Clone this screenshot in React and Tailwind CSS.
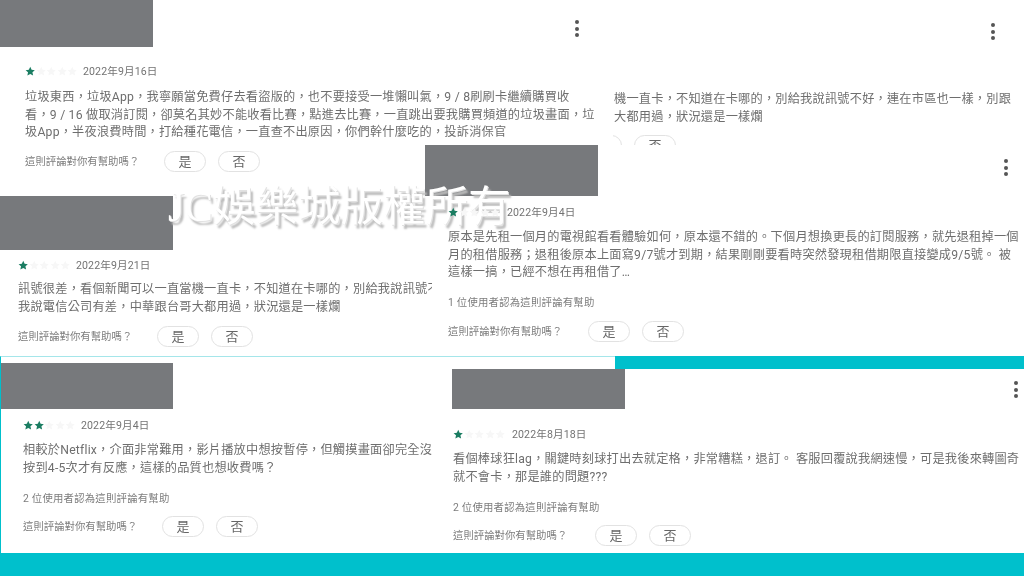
const sans = { fontFamily: '"Roboto","Noto Sans CJK TC","Noto Sans CJK SC",sans-serif' };

function Star({ on }) {
  return (
    <svg viewBox="0 0 24 24" className="w-[10.5px] h-[10.5px] shrink-0" aria-hidden="true">
      <path d="M12 1.8l3.1 6.9 7.4.8-5.5 5 1.5 7.4L12 18.2l-6.6 3.7 1.5-7.4-5.5-5 7.4-.8z" fill={on ? "#1b7d62" : "#f7f7f7"} />
    </svg>
  );
}

function Rating({ n, date, gap }) {
  return (
    <div className={`flex items-center ${gap}`}>
      <div className="relative z-10 flex w-[50px]">
        {[1, 2, 3, 4, 5].map((i) => (
          <Star key={i} on={i <= n} />
        ))}
      </div>
      <span className="text-[10.6px] leading-[16px] tracking-[0.1px] text-[#737373] translate-y-[1px]">{date}</span>
    </div>
  );
}

function Dots() {
  return (
    <div className="flex flex-col gap-[2.5px]">
      <span className="w-1 h-1 rounded-full bg-[#555]" />
      <span className="w-1 h-1 rounded-full bg-[#555]" />
      <span className="w-1 h-1 rounded-full bg-[#555]" />
    </div>
  );
}

function Btn({ children }) {
  return (
    <span className="w-[42px] h-[21px] rounded-full border border-[#e2e2e2] bg-white flex items-center justify-center text-[13px] text-[#666]">
      {children}
    </span>
  );
}

function Help({ w = "w-[139px]" }) {
  return (
    <div className="flex items-center">
      <span className={`${w} text-[10.4px] leading-[14px] text-[#7d7d7d] whitespace-nowrap`}>這則評論對你有幫助嗎？</span>
      <div className="flex gap-3">
        <Btn>是</Btn>
        <Btn>否</Btn>
      </div>
    </div>
  );
}

function Body({ lines }) {
  return (
    <div className="text-[12.2px] leading-[17.7px] text-[#6e6e6e] whitespace-nowrap tracking-[0.22px]">
      {lines.map((l) => (
        <div key={l}>{l}</div>
      ))}
    </div>
  );
}

function Voted({ children }) {
  return <div className="text-[10.4px] leading-[14px] tracking-[0.2px] text-[#7d7d7d] whitespace-nowrap">{children}</div>;
}

function Grey({ className }) {
  return <div className={`bg-[#77797c] shrink-0 ${className}`} />;
}

export default function App() {
  return (
    <div className="relative w-[1024px] h-[576px] overflow-hidden bg-white blur-[0.4px]" style={sans}>
      {/* Review A */}
      <section className="absolute left-0 top-0 w-[613px] h-[196px] overflow-hidden bg-white">
        <Grey className="w-[153px] h-[47px]" />
        <div className="pl-[25px] pt-[16px]">
          <Rating n={1} date="2022年9月16日" gap="gap-[8px]" />
          <div className="mt-[10px]">
            <Body
              lines={[
                "垃圾東西，垃圾App，我寧願當免費仔去看盜版的，也不要接受一堆懶叫氣，9 / 8刷刷卡繼續購買收",
                "看，9 / 16 做取消訂閱，卻莫名其妙不能收看比賽，點進去比賽，一直跳出要我購買頻道的垃圾畫面，垃",
                "圾App，半夜浪費時間，打給種花電信，一直查不出原因，你們幹什麼吃的，投訴消保官",
              ]}
            />
          </div>
          <div className="mt-[9px]">
            <Help />
          </div>
        </div>
        <div className="absolute left-[575px] top-[20px]">
          <Dots />
        </div>
      </section>

      {/* Review top right */}
      <section className="absolute left-[613px] top-0 w-[411px] h-[145px] overflow-hidden bg-white">
        <div className="pt-[91px] pl-[1px]">
          <Body
            lines={[
              "機一直卡，不知道在卡哪的，別給我說訊號不好，連在市區也一樣，別跟",
              "大都用過，狀況還是一樣爛",
            ]}
          />
          <div className="flex gap-3 mt-[9px] ml-[-34px]">
            <Btn>是</Btn>
            <Btn>否</Btn>
          </div>
        </div>
        <div className="absolute left-[378px] top-[23px]">
          <Dots />
        </div>
      </section>

      {/* Review D */}
      <section className="absolute left-[425px] top-[145px] w-[599px] h-[211px] bg-white">
        <Grey className="w-[173px] h-[51px]" />
        <div className="pl-[23px] pt-[8px]">
          <Rating n={1} date="2022年9月4日" gap="gap-[9px]" />
          <div className="mt-[9px] w-[576px] overflow-hidden">
            <Body
              lines={[
                "原本是先租一個月的電視館看看體驗如何，原本還不錯的。下個月想換更長的訂閱服務，就先退租掉一個",
                "月的租借服務；退租後原本上面寫9/7號才到期，結果剛剛要看時突然發現租借期限直接變成9/5號。 被",
                "這樣一搞，已經不想在再租借了…",
              ]}
            />
          </div>
          <div className="mt-[14px]">
            <Voted>1 位使用者認為這則評論有幫助</Voted>
          </div>
          <div className="mt-[11px]">
            <Help w="w-[140px]" />
          </div>
        </div>
        <div className="absolute left-[579px] top-[14px]">
          <Dots />
        </div>
      </section>

      {/* Review C */}
      <section className="absolute left-0 top-[196px] w-[432px] h-[160px] overflow-hidden bg-white">
        <Grey className="w-[173px] h-[54px]" />
        <div className="pl-[18px] pt-[7px]">
          <Rating n={1} date="2022年9月21日" gap="gap-[8px]" />
          <div className="mt-[8px]">
            <Body
              lines={[
                "訊號很差，看個新聞可以一直當機一直卡，不知道在卡哪的，別給我說訊號不好，連在市區也一樣，別跟",
                "我說電信公司有差，中華跟台哥大都用過，狀況還是一樣爛",
              ]}
            />
          </div>
          <div className="mt-[10px]">
            <Help />
          </div>
        </div>
      </section>

      {/* Review E */}
      <section className="absolute left-0 top-[356px] w-[615px] h-[197px] overflow-hidden bg-white border-t border-l border-t-[#a5e6ea] border-l-[#00c0cc]">
        <Grey className="w-[173px] h-[46px] mt-[6px] ml-[-1px]" />
        <div className="pl-[22px] pt-[8px]">
          <Rating n={2} date="2022年9月4日" gap="gap-[8px]" />
          <div className="mt-[9px]">
            <Body
              lines={[
                "相較於Netflix，介面非常難用，影片播放中想按暫停，但觸摸畫面卻完全沒",
                "按到4-5次才有反應，這樣的品質也想收費嗎？",
              ]}
            />
          </div>
          <div className="mt-[15px]">
            <Voted>2 位使用者認為這則評論有幫助</Voted>
          </div>
          <div className="mt-[10px]">
            <Help />
          </div>
        </div>
      </section>

      {/* Teal band */}
      <div className="absolute left-[615px] top-[356px] w-[409px] h-[13px] bg-[#00c0cc]" />

      {/* Review F */}
      <section className="absolute left-[434px] top-[369px] w-[590px] h-[184px] overflow-hidden bg-white">
        <Grey className="w-[173px] h-[40px] ml-[18px]" />
        <div className="pl-[19px] pt-[17px]">
          <Rating n={1} date="2022年8月18日" gap="gap-[9px]" />
          <div className="mt-[9px]">
            <Body
              lines={[
                "看個棒球狂lag，關鍵時刻球打出去就定格，非常糟糕，退訂。 客服回覆說我網速慢，可是我後來轉圖奇",
                "就不會卡，那是誰的問題???",
              ]}
            />
          </div>
          <div className="mt-[15px]">
            <Voted>2 位使用者認為這則評論有幫助</Voted>
          </div>
          <div className="mt-[10px]">
            <Help w="w-[142px]" />
          </div>
        </div>
        <div className="absolute left-[580px] top-[12px]">
          <Dots />
        </div>
      </section>

      {/* Bottom band */}
      <div className="absolute left-0 top-[553px] w-full h-[23px] bg-[#00c0cc]" />

      {/* Watermark */}
      <div
        className="absolute left-[168px] top-[177px] text-[42.5px] leading-[60px] font-normal text-white whitespace-nowrap [text-shadow:1px_1px_0_#e2e2e2,3px_4px_2px_#bdbdbd]"
        style={{ fontFamily: '"Liberation Serif","Noto Sans CJK TC",serif' }}
      >
        JC娛樂城版權所有
      </div>
    </div>
  );
}
